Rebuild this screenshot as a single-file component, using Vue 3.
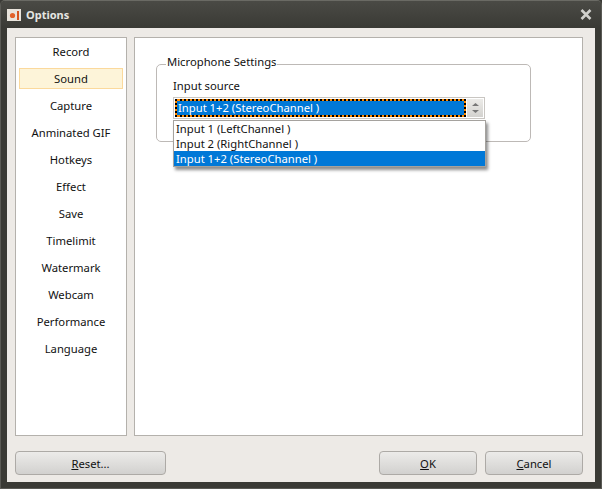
<script setup>
const items = ['Record','Sound','Capture','Anminated GIF','Hotkeys','Effect','Save','Timelimit','Watermark','Webcam','Performance','Language']
</script>

<template>
  <div class="win">
    <div class="title">
      <svg class="logo" width="14" height="14" viewBox="0 0 14 14">
        <rect x="0" y="1" width="14" height="12" fill="#e9e4dc"/>
        <circle cx="5.5" cy="7.5" r="2.6" fill="#e2622a"/>
        <rect x="10" y="3" width="2" height="9" fill="#d4541f"/>
      </svg>
      <span class="title-text">Options</span>
      <svg class="close" width="12" height="11" viewBox="0 0 12 11">
        <path d="M1.5 1 L10.5 10 M10.5 1 L1.5 10" stroke="#cfcfcb" stroke-width="2.6"/>
      </svg>
    </div>
    <div class="body">
      <div class="main">
        <ul class="side">
          <li v-for="it in items" :key="it" class="item" :class="{ sel: it === 'Sound' }">{{ it }}</li>
        </ul>
        <div class="panel">
          <div class="group">
            <span class="legend">Microphone Settings</span>
            <div class="label">Input source</div>
            <div class="combo-wrap">
              <div class="combo">
                <div class="combo-val"><span>Input 1+2 (StereoChannel )</span></div>
                <div class="spin">
                  <svg width="9" height="14" viewBox="0 0 9 14">
                    <path d="M4.5 2 L8 5 H1 Z" fill="#777"/>
                    <path d="M4.5 12 L8 9 H1 Z" fill="#777"/>
                  </svg>
                </div>
              </div>
              <div class="menu">
                <div class="opt">Input 1 (LeftChannel )</div>
                <div class="opt">Input 2 (RightChannel )</div>
                <div class="opt on">Input 1+2 (StereoChannel )</div>
              </div>
            </div>
          </div>
        </div>
      </div>
      <div class="foot">
        <button class="btn reset"><u>R</u>eset...</button>
        <div class="spacer"></div>
        <button class="btn ok"><u>O</u>K</button>
        <button class="btn cancel"><u>C</u>ancel</button>
      </div>
    </div>
  </div>
</template>

<style>
html, body { margin: 0; padding: 0; background: #3a3a36; }
</style>

<style scoped>
.win {
  width: 602px;
  height: 489px;
  box-sizing: border-box;
  background: #3a3a35;
  border: 1px solid #5a5a55;
  border-top-color: #6a6a64;
  border-radius: 5px 5px 0 0;
  padding: 0 6px 6px;
  display: flex;
  flex-direction: column;
  font-family: "Noto Sans", sans-serif;
  font-size: 11.25px;
  color: #111;
  overflow: hidden;
}
.title {
  height: 27px;
  flex: none;
  display: flex;
  align-items: center;
  background: linear-gradient(#4a4a45, #3a3a35);
  margin: 0 -6px;
  padding: 1px 9px 0 6px;
  box-sizing: border-box;
}
.logo { flex: none; margin-right: 5px; }
.title-text { color: #e6e6e2; font-weight: 700; font-size: 11px; flex: 1; position: relative; top: -1px; }
.close { margin-top: -1px; }
.body {
  flex: 1;
  background: #edeae6;
  padding: 9px 12px 0 8px;
  display: flex;
  flex-direction: column;
  min-height: 0;
}
.main {
  height: 399px;
  flex: none;
  display: flex;
  gap: 7px;
}
.side {
  width: 112px;
  box-sizing: border-box;
  margin: 0;
  padding: 3px;
  list-style: none;
  background: #fff;
  border: 1px solid #b4b1ac;
}
.item {
  height: 27px;
  line-height: 21px;
  box-sizing: border-box;
  text-align: center;
}
.item.sel {
  height: 21px;
  margin-bottom: 6px;
  line-height: 19px;
  background: #fdf4d9;
  border: 1px solid #fbd99c;
}
.panel {
  flex: 1;
  background: #fff;
  border: 1px solid #b4b1ac;
  padding: 26px 0 0 21px;
}
.group {
  width: 375px;
  height: 78px;
  box-sizing: border-box;
  padding: 13px 0 0 16px;
  border: 1px solid #bdb9b6;
  border-radius: 5px;
  position: relative;
}
.legend {
  position: absolute;
  left: 9px;
  top: -11px;
  padding: 0 1px;
  background: #fff;
  line-height: 16px;
}
.label { line-height: 16px; }
.combo-wrap { position: relative; margin-top: 3px; width: 313px; }
.combo {
  width: 312px;
  height: 22px;
  box-sizing: border-box;
  border: 1px solid #c9c6c2;
  background: #fff;
  padding: 1px;
  display: flex;
}
.combo-val {
  flex: 1;
  color: #fff;
  background: linear-gradient(#0078d7, #0078d7) padding-box, #ff8a00 border-box;
  border: 2px dotted #000;
  box-sizing: border-box;
  line-height: 14px;
  padding-left: 1px;
}
.spin {
  width: 16px;
  margin-left: 1px;
  background: linear-gradient(#ecebe8, #d3d2cf);
  display: flex;
  align-items: center;
  justify-content: center;
}
.menu {
  position: absolute;
  left: 0;
  top: 23px;
  width: 313px;
  box-sizing: border-box;
  background: #fff;
  border: 1px solid #a5a29e;
  box-shadow: 2px 3px 3px rgba(0,0,0,0.45);
}
.opt { height: 15px; line-height: 15px; padding-left: 2px; }
.opt.on { background: #0078d7; color: #fff; }
.foot {
  display: flex;
  margin-top: 15px;
  gap: 8px;
}
.spacer { flex: 1; }
.btn {
  height: 24px;
  box-sizing: border-box;
  border: 1px solid #adaaa6;
  border-radius: 4px;
  background: linear-gradient(#ecebe9, #d2d1cf);
  font: inherit;
  color: #111;
  padding: 0;
}
.reset { width: 151px; }
.ok, .cancel { width: 98px; }
</style>
